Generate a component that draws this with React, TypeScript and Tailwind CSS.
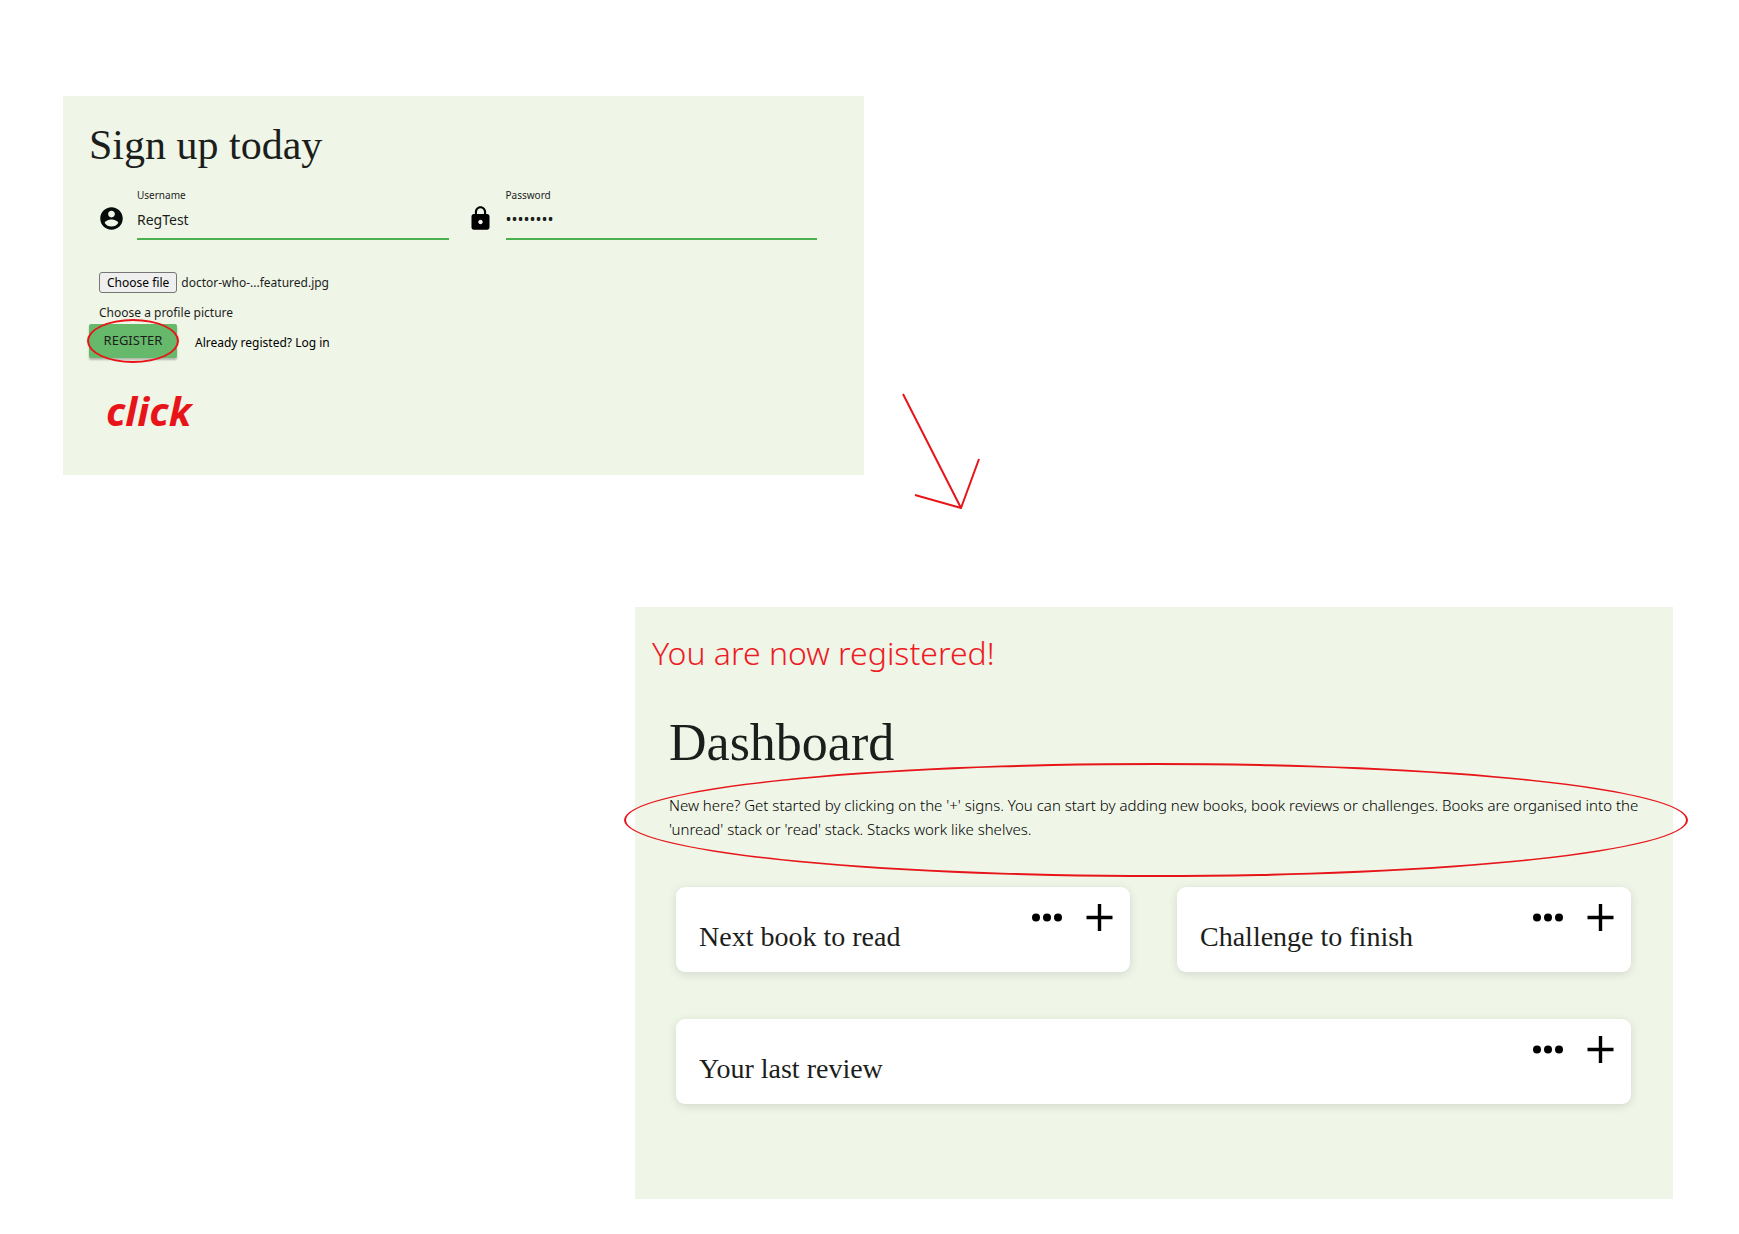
import React from "react";

function AccountIcon() {
  return (
    <svg className="size-[27px] shrink-0" viewBox="0 0 24 24" fill="#050d0b" aria-hidden="true">
      <path d="M12 2C6.48 2 2 6.48 2 12s4.48 10 10 10 10-4.48 10-10S17.52 2 12 2zm0 3c1.66 0 3 1.34 3 3s-1.34 3-3 3-3-1.34-3-3 1.34-3 3-3zm0 14.2c-2.5 0-4.71-1.28-6-3.22.03-1.99 4-3.08 6-3.08 1.99 0 5.97 1.09 6 3.08-1.29 1.94-3.5 3.22-6 3.22z" />
    </svg>
  );
}

function LockIcon() {
  return (
    <svg className="size-[27px] shrink-0" viewBox="0 0 24 24" fill="#000" aria-hidden="true">
      <path d="M18 8h-1V6c0-2.76-2.24-5-5-5S7 3.24 7 6v2H6c-1.1 0-2 .9-2 2v10c0 1.1.9 2 2 2h12c1.1 0 2-.9 2-2V10c0-1.1-.9-2-2-2zm-6 9c-1.1 0-2-.9-2-2s.9-2 2-2 2 .9 2 2-.9 2-2 2zm3.1-9H8.9V6c0-1.71 1.39-3.1 3.1-3.1 1.71 0 3.1 1.39 3.1 3.1v2z" />
    </svg>
  );
}

function Field(props: {
  id: string;
  label: string;
  type: string;
  value: string;
  textClass: string;
  icon: React.ReactNode;
}) {
  return (
    <div className="flex items-end gap-3">
      <div className="pb-2">{props.icon}</div>
      <div className="flex min-w-0 flex-1 flex-col">
        <label htmlFor={props.id} className="text-[10px] leading-4">
          {props.label}
        </label>
        <input
          id={props.id}
          type={props.type}
          defaultValue={props.value}
          className={
            "h-[37px] w-full border-b-2 border-[#4caf50] bg-transparent pb-[3px] text-[#1c1e1c] outline-none " +
            props.textClass
          }
        />
      </div>
    </div>
  );
}

function Card(props: { title: string; className?: string }) {
  return (
    <article
      className={
        "flex h-[85px] items-start justify-between rounded-[9px] bg-white pt-[17px] pr-[17px] pl-[23px] shadow-[0_2px_10px_rgba(0,0,0,0.12)] " +
        (props.className ?? "")
      }
    >
      <h3 className="pt-[15px] font-['Liberation_Serif',serif] text-[28px] leading-9 text-[#1c1e1c]">{props.title}</h3>
      <div className="flex items-center gap-[23px]">
        <button type="button" aria-label={"More options for " + props.title}>
          <svg className="h-[27px] w-8" viewBox="0 0 32 27" fill="#000">
            <circle cx="5" cy="13.5" r="4" />
            <circle cx="16" cy="13.5" r="4" />
            <circle cx="27" cy="13.5" r="4" />
          </svg>
        </button>
        <button type="button" aria-label={"Add to " + props.title}>
          <svg className="size-[27px]" viewBox="0 0 27 27" stroke="#000" strokeWidth="3.4">
            <path d="M13.5 0v27M0.5 13.5h26" />
          </svg>
        </button>
      </div>
    </article>
  );
}

export default function App() {
  return (
    <main className="min-h-screen bg-white px-[63px] pt-24 pb-9 font-['Noto_Sans',sans-serif] text-[#1c1e1c]">
      <div className="grid grid-cols-[801fr_812fr] items-start">
        <section className="bg-[#eff5e7] px-[26px] pt-[23px] pb-[37px]">
          <h1 className="font-['Liberation_Serif',serif] text-[42px] leading-[52px]">Sign up today</h1>
          <form className="pt-4">
            <div className="grid grid-cols-2 gap-x-[18px] pr-[21px] pl-[9px]">
              <Field
                id="username"
                label="Username"
                type="text"
                value="RegTest"
                textClass="text-sm"
                icon={<AccountIcon />}
              />
              <Field
                id="password"
                label="Password"
                type="password"
                value="password"
                textClass="text-base"
                icon={<LockIcon />}
              />
            </div>
            <div className="flex items-center gap-1 pt-8 pl-[10px] text-xs">
              <label
                htmlFor="picture"
                className="h-[21px] rounded-[3px] border border-[#767676] bg-[#efefef] px-[7px] leading-5 text-black"
              >
                Choose file
              </label>
              <input id="picture" type="file" className="sr-only" />
              <span className="pt-px">doctor-who-...featured.jpg</span>
            </div>
            <p className="pt-[10px] pl-[10px] text-xs leading-5">Choose a profile picture</p>
            <div className="flex items-center gap-[18px] pt-px">
              <div className="relative">
                <button
                  type="submit"
                  className="h-[34px] w-[88px] rounded-[2px] bg-[#66b96a] text-[13px] shadow-[0_2px_2px_rgba(0,0,0,0.25)]"
                >
                  REGISTER
                </button>
                <div className="pointer-events-none absolute -inset-x-[2px] -inset-y-[5px] rounded-[50%] border-2 border-[#e71519]" />
              </div>
              <p className="pt-1 text-xs text-black">
                Already registed? <a href="#login">Log in</a>
              </p>
            </div>
          </form>
          <p className="pt-[26px] pl-[17px] text-[40px] leading-[54px] font-bold text-[#e71519] italic">click</p>
        </section>
        <svg
          className="mt-[297px] ml-[37px] h-[116px] w-[80px]"
          viewBox="0 0 80 116"
          fill="none"
          stroke="#e71519"
          strokeWidth="2"
          aria-hidden="true"
        >
          <path d="M2 1L60 115M14 102L60 115L78 66" />
        </svg>
      </div>

      <div className="mt-[98px] grid grid-cols-[572fr_1038fr_3fr]">
        <section className="col-start-2 bg-[#eff5e7] pt-6 pr-3 pb-[95px] pl-[17px]">
          <p className="text-[32px] leading-[44px] font-light text-[#ed1c24]">You are now registered!</p>
          <div className="pt-[34px] pl-[17px]">
            <h2 className="font-['Liberation_Serif',serif] text-[52px] leading-[68px]">Dashboard</h2>
            <div className="relative pt-4 pb-px">
              <p className="text-[15px] leading-6 font-light text-black">
                New here? Get started by clicking on the '+' signs. You can start by adding new books, book reviews or
                challenges. Books are organised into the 'unread' stack or 'read' stack. Stacks work like shelves.
              </p>
              <div className="pointer-events-none absolute -top-[14px] -right-[27px] -bottom-[35px] -left-[45px] rounded-[50%] border-2 border-[#e71519]" />
            </div>
            <div className="grid grid-cols-2 gap-[47px] pt-[45px] pr-[30px] pl-[7px]">
              <Card title="Next book to read" />
              <Card title="Challenge to finish" />
              <Card title="Your last review" className="col-span-2" />
            </div>
          </div>
        </section>
      </div>
    </main>
  );
}
